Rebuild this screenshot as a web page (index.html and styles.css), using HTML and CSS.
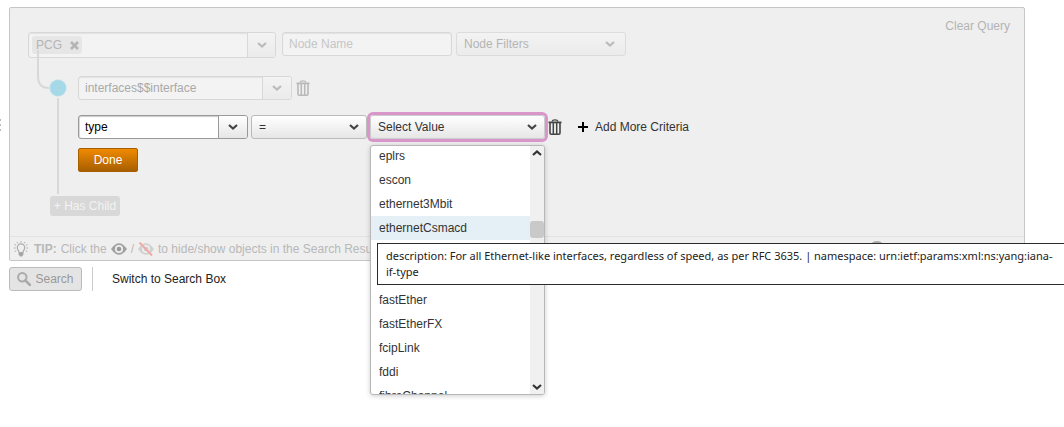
FILE: index.html
```html
<!DOCTYPE html>
<html lang="en">
<head>
<meta charset="utf-8">
<title>Query Builder</title>
<link rel="stylesheet" href="styles.css">
</head>
<body>
<svg class="defs" width="0" height="0" aria-hidden="true">
  <symbol id="chevron" viewBox="0 0 10 6"><path d="M1 1L5 4.500L9 1" fill="none" stroke="currentColor" stroke-width="2.200"/></symbol>
  <symbol id="trash" viewBox="0 0 14 16">
    <path d="M4 2.500C4.500 .2 9.500 .2 10 2.500" fill="none" stroke="currentColor" stroke-width="1.200"/>
    <path d="M.5 2.500H13.500V4.300H.5Z" fill="currentColor"/>
    <path d="M2 4V14Q2 15.200 3.200 15.200H10.800Q12 15.200 12 14V4" fill="none" stroke="currentColor" stroke-width="1.600"/>
    <path d="M5.300 4V15M8.700 4V15" stroke="currentColor" stroke-width="1.500"/>
  </symbol>
</svg>
<div class="grip" aria-hidden="true"><i></i><i></i><i></i></div>
<main class="page">
  <section class="panel">
    <div class="builder">
      <svg class="tree" width="60" height="200" viewBox="0 0 60 200" aria-hidden="true">
        <path d="M10 42V68Q10 80 21 80M30 90V186" fill="none" stroke="#d8d8d8" stroke-width="2"/>
        <circle cx="30" cy="80" r="9" fill="#d6e9ee"/>
        <circle cx="30" cy="80" r="8" fill="#a6d9e7"/>
      </svg>
      <div class="rows">
        <div class="row row-root faded">
          <div class="combo combo-root">
            <span class="chip">PCG
              <button class="chip-x" aria-label="Remove PCG"><svg width="9" height="9" viewBox="0 0 9 9"><path d="M1 1L8 8M8 1L1 8" stroke="currentColor" stroke-width="2.600"/></svg></button>
            </span>
            <input type="text" aria-label="Node type">
            <button class="arrow" aria-label="Show node types"><svg width="10" height="6"><use href="#chevron"/></svg></button>
          </div>
          <input class="name" type="text" placeholder="Node Name" aria-label="Node Name">
          <div class="select filters">
            <select aria-label="Node Filters"><option>Node Filters</option></select>
            <svg width="10" height="6"><use href="#chevron"/></svg>
          </div>
        </div>
        <div class="row row-child faded">
          <div class="combo combo-child">
            <input type="text" value="interfaces$$interface" aria-label="Child node">
            <button class="arrow" aria-label="Show child nodes"><svg width="10" height="6"><use href="#chevron"/></svg></button>
          </div>
          <button class="icon" aria-label="Delete child"><svg width="14" height="16"><use href="#trash"/></svg></button>
        </div>
        <div class="row row-criteria">
          <div class="combo combo-type">
            <input type="text" value="type" aria-label="Attribute">
            <button class="arrow" aria-label="Show attributes"><svg width="10" height="6"><use href="#chevron"/></svg></button>
          </div>
          <div class="select operator">
            <select aria-label="Operator"><option>=</option></select>
            <svg width="10" height="6"><use href="#chevron"/></svg>
          </div>
          <div class="select value">
            <select aria-label="Value"><option>Select Value</option></select>
            <svg width="10" height="6"><use href="#chevron"/></svg>
            <div class="menu">
              <ul class="options" role="listbox" aria-label="Values">
                <li role="option">eplrs</li>
                <li role="option">escon</li>
                <li role="option">ethernet3Mbit</li>
                <li role="option" class="active" aria-selected="true">ethernetCsmacd</li>
                <li role="option" class="spacer"></li>
                <li role="option" class="spacer"></li>
                <li role="option">fastEther</li>
                <li role="option">fastEtherFX</li>
                <li role="option">fcipLink</li>
                <li role="option">fddi</li>
                <li role="option">fibreChannel</li>
              </ul>
              <div class="scroll" aria-hidden="true">
                <svg class="up" width="10" height="6"><use href="#chevron"/></svg>
                <span class="thumb"></span>
                <svg class="down" width="10" height="6"><use href="#chevron"/></svg>
              </div>
            </div>
          </div>
          <button class="icon" aria-label="Delete criteria"><svg width="14" height="16"><use href="#trash"/></svg></button>
          <button class="add"><svg width="10" height="10" viewBox="0 0 10 10" aria-hidden="true"><path d="M5 0V10M0 5H10" stroke="#000" stroke-width="2"/></svg>Add More Criteria</button>
        </div>
        <button class="done">Done</button>
        <button class="has-child">+ Has Child</button>
      </div>
      <button class="clear">Clear Query</button>
    </div>
    <footer class="tip">
      <svg class="bulb" width="14" height="16" viewBox="0 0 14 16" aria-hidden="true">
        <path d="M5 11.500C5 9.500 3.300 9 3.300 6.600A3.700 3.700 0 0 1 10.700 6.600C10.700 9 9 9.500 9 11.500Z" fill="none" stroke="#ababab" stroke-width="1.200"/>
        <path d="M4.600 12H9.400V13.500L8 15.500H6L4.600 13.500Z" fill="#a6a6a6"/>
        <path d="M7 0V1.500M3 1L3.800 2.300M11 1L10.200 2.300M.5 3.500L2 4.300M13.500 3.500L12 4.300M0 7H1.600M12.400 7H14M.8 10.500L2.200 9.700M13.200 10.500L11.800 9.700" stroke="#aaa"/>
      </svg>
      <b>TIP:</b>
      <span>Click the</span>
      <svg width="16" height="12" viewBox="0 0 16 12" aria-hidden="true"><path d="M0 6Q8-5.500 16 6Q8 17.500 0 6Z" fill="#a2a2a2"/><circle cx="8" cy="6" r="4" fill="#eee"/><circle cx="8" cy="6" r="2.300" fill="#999"/></svg>
      <span>/</span>
      <svg width="16" height="14" viewBox="0 0 16 14" aria-hidden="true"><path d="M0 7Q8-4.500 16 7Q8 18.500 0 7Z" fill="#d0d0d0"/><circle cx="8" cy="7" r="4" fill="#eee"/><circle cx="8" cy="7" r="2.300" fill="#ccc"/><path d="M1.500 .5L14 13.500" stroke="#efaaa7" stroke-width="2"/></svg>
      <span>to hide/show objects in the Search Results</span>
      <span class="info" aria-hidden="true"></span>
    </footer>
    <div class="tooltip" role="tooltip">description: For all Ethernet-like interfaces, regardless of speed, as per RFC 3635. | namespace: urn:ietf:params:xml:ns:yang:iana-if-type</div>
  </section>
  <div class="actions">
    <button class="search"><svg width="14" height="14" viewBox="0 0 14 14" aria-hidden="true"><circle cx="5.300" cy="5.300" r="4.200" fill="none" stroke="#aaa" stroke-width="2"/><path d="M8.300 8.300L13 13" stroke="#aaa" stroke-width="2.600" stroke-linecap="round"/></svg>Search</button>
    <a class="switch" href="#">Switch to Search Box</a>
  </div>
</main>
</body>
</html>
```
FILE: styles.css
```css
* { box-sizing: border-box; }
body {
  min-height: 100vh;
  margin: 0;
  background: #fff;
  color: #333;
  font: 12px/16px "Liberation Sans", Arial, sans-serif;
}
button, input, select { font: inherit; color: inherit; margin: 0; }
button { padding: 0; border: 0; background: none; }
svg { display: block; flex: none; }
.defs { position: absolute; }
.page { padding: 7px 39px 0 9px; }
.grip {
  position: absolute;
  top: 119px;
  left: 0;
  display: grid;
  gap: 3px;
}
.grip i { width: 1px; height: 2px; background: #bbb; }

.panel {
  position: relative;
  border: 1px solid #c6c6c6;
  border-radius: 2px;
  background: #efefef;
}
.builder {
  position: relative;
  display: flex;
  justify-content: space-between;
  align-items: flex-start;
  padding: 10px 14px 20px 18px;
}
.tree { position: absolute; top: 0; left: 18px; z-index: 1; }
.rows {
  display: flex;
  flex-direction: column;
  align-items: flex-start;
  padding-top: 14px;
}
.row { display: flex; align-items: flex-start; }
.faded { color: #b4b4b4; }
.row-root { gap: 4px; }
.row-child { margin: 18px 0 0 50px; gap: 4px; }
.row-criteria { margin: 15px 0 0 50px; gap: 3px; align-items: center; }

.combo {
  display: flex;
  height: 24px;
  border: 1px solid #999;
  border-radius: 3px;
  background: #fff;
  box-shadow: inset 0 1px 1px #ccc, inset 1px 0 0 #ddd;
}
.combo input {
  flex: 1;
  min-width: 0;
  padding: 0 6px;
  border: 0;
  background: none;
  outline: 0;
}
.arrow {
  display: flex;
  align-items: center;
  justify-content: center;
  width: 29px;
  border-left: 1px solid #999;
  border-radius: 0 2px 2px 0;
  background: linear-gradient(#fff, #e6e6e6);
  color: #444;
}
.faded .combo, .faded .name {
  border-color: #d8d8d8;
  background: #f3f3f3;
  box-shadow: inset 0 1px 1px #e2e2e2;
}
.faded .arrow {
  border-color: #d8d8d8;
  background: linear-gradient(#f3f3f3, #ebebeb);
  color: #bbb;
}
.faded .icon { color: #b8b8b8; }
.combo-root { width: 248px; height: 26px; margin-right: 2px; }
.combo-root .arrow { width: 28px; }
.combo-child { width: 214px; }
.faded .combo-child input { color: #a9a9a9; }
.combo-type { width: 170px; color: #000; }
.chip {
  display: flex;
  align-items: center;
  gap: 8px;
  height: 18px;
  margin: 3px;
  padding: 0 3px 0 4px;
  border-radius: 3px;
  background: #e6e6e6;
}
.name {
  width: 170px;
  height: 24px;
  padding: 0 6px;
  border: 1px solid;
  border-radius: 3px;
}
.name::placeholder { color: #c6c6c6; opacity: 1; }

.select { position: relative; display: flex; align-items: center; height: 24px; }
.select select {
  appearance: none;
  width: 100%;
  height: 100%;
  padding: 0 24px 0 7px;
  border: 1px solid #bbb;
  border-radius: 3px;
  background: linear-gradient(#fff, #e6e6e6);
  outline: 0;
}
.select > svg { position: absolute; right: 8px; color: #444; pointer-events: none; }
.filters { width: 170px; }
.filters select { border-color: #dcdcdc; background: linear-gradient(#f3f3f3, #ebebeb); }
.filters > svg { right: 11px; color: #bbb; }
.operator { width: 116px; }
.value { width: 175px; }
.value select { border-color: #ccc; box-shadow: 0 0 0 3px #d896ca; }

.menu {
  position: absolute;
  top: 30px;
  left: 0;
  right: 0;
  z-index: 2;
  display: flex;
  height: 250px;
  border: 1px solid #b8b8b8;
  border-radius: 3px;
  background: #fff;
  box-shadow: 0 1px 5px rgba(0, 0, 0, .2);
  overflow: hidden;
}
.options { flex: 1; margin: -2px 0 0; padding: 0; list-style: none; }
.options li { height: 24px; padding: 0 8px; line-height: 24px; }
.options .active { background: #e5f0f6; }
.scroll {
  display: flex;
  flex-direction: column;
  align-items: center;
  width: 14px;
  padding: 4px 0;
  background: #f0f0f0;
}
.up { transform: rotate(180deg); }
.thumb { width: 14px; height: 17px; margin-top: 65px; border-radius: 3px; background: #c9c9c9; }
.down { margin-top: auto; }

.icon { color: #444; }
.row-child .icon { padding-top: 4px; }
.add { display: flex; align-items: center; gap: 7px; margin-left: 13px; }
.done {
  width: 60px;
  height: 24px;
  margin: 9px 0 0 50px;
  border: 1px solid #a65e00;
  border-radius: 2px;
  background: linear-gradient(#ef8a00, #a85f00);
  color: #fff;
}
.has-child {
  width: 70px;
  height: 20px;
  margin: 24px 0 0 22px;
  border-radius: 3px;
  background: #d8d8d8;
  color: #f3f3f3;
}
.clear { color: #b4b4b4; line-height: 16px; }

.tip {
  display: flex;
  align-items: center;
  gap: 4px;
  height: 24px;
  padding: 0 139px 0 4px;
  border-top: 1px solid #e2e2e2;
  color: #b8b8b8;
  white-space: nowrap;
}
.bulb { margin-right: 2px; }
.info { width: 16px; height: 16px; margin-left: auto; border-radius: 50%; background: #aaa; }

.tooltip {
  position: absolute;
  top: 235px;
  left: 367px;
  right: -40px;
  z-index: 3;
  padding: 4px 4px 4px 8px;
  border: 1px solid #2b2b2b;
  border-right: 0;
  background: #fff;
  color: #222;
  font-family: "Noto Sans", "Open Sans", sans-serif;
  font-size: 11px;
}

.actions { display: flex; align-items: center; height: 24px; margin-top: 6px; }
.search {
  display: flex;
  align-items: center;
  justify-content: center;
  gap: 4px;
  width: 73px;
  height: 24px;
  border: 1px solid #bbb;
  border-radius: 3px;
  background: #e4e4e4;
  color: #999;
}
.switch {
  margin-left: 10px;
  padding: 4px 0 4px 19px;
  border-left: 1px solid #ccc;
  color: #222;
  text-decoration: none;
}
```
